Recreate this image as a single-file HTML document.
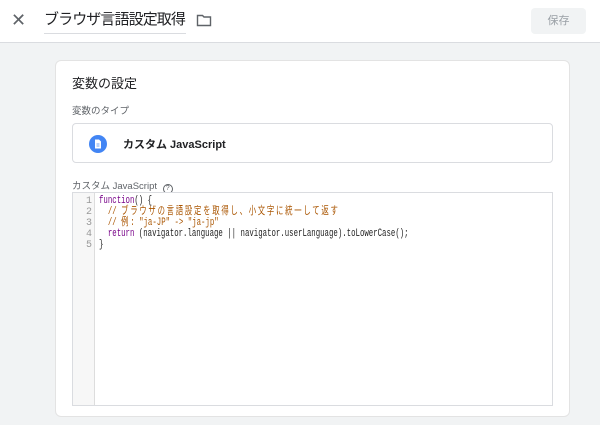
<!DOCTYPE html>
<html><head><meta charset="utf-8"><style>
*{margin:0;padding:0;box-sizing:border-box}
body{width:600px;height:425px;overflow:hidden;background:#f1f3f4;font-family:"Liberation Sans","Noto Sans CJK JP",sans-serif;color:#202124;position:relative}
.hdr{position:absolute;left:0;top:0;width:600px;height:43px;background:#fff;border-bottom:1px solid #dadce0}
.x{position:absolute;left:11px;top:10px;font-size:18px;color:#5f6368}
.title{position:absolute;left:44px;top:9px;width:142px;font-size:15px;letter-spacing:-0.9px;color:#202124;border-bottom:1px solid #dadce0;padding-bottom:2px;line-height:22px;white-space:nowrap}
.save{position:absolute;left:531px;top:8px;width:55px;height:26px;background:#f1f3f4;border-radius:4px;font-size:11px;color:#9aa0a6;text-align:center;line-height:26px}
.card{position:absolute;left:55px;top:60px;width:515px;height:357px;background:#fff;border:1px solid #e3e3e3;border-radius:6px}
.h{position:absolute;left:16px;top:12px;font-size:13px}
.lbl{position:absolute;font-size:9.5px;color:#5f6368}
.type{position:absolute;left:16px;top:62px;width:481px;height:40px;border:1px solid #dadce0;border-radius:4px}
.ic{position:absolute;left:16px;top:11px;width:18px;height:18px;border-radius:50%;background:#4285f4}
.tt{position:absolute;left:50px;top:12px;font-size:11px;font-weight:bold}
.code{position:absolute;left:16px;top:131px;width:481px;height:214px;border:1px solid #dadce0;background:#fff;overflow:hidden}
.gut{position:absolute;left:0;top:0;width:22px;height:100%;background:#f7f7f7;border-right:1px solid #ddd}
pre{font-family:"Liberation Mono","Noto Sans CJK JP",monospace;font-size:11px;line-height:11px}
.ln{position:absolute;left:0;top:3px;width:19px;text-align:right;color:#999;font-size:10px}
.src{position:absolute;left:26px;top:3px;color:#222;transform:scaleX(.67);transform-origin:0 0}
.k{color:#708}.c{color:#a50}.j{letter-spacing:2.6px}
</style></head><body>
<div class="hdr"><div class="x">✕</div><div class="title">ブラウザ言語設定取得</div>
<svg style="position:absolute;left:196px;top:14px" width="16" height="13" viewBox="0 0 16 13"><path d="M1.5 1.5h5l1.5 1.5h6.5v8.5h-13z" fill="none" stroke="#5f6368" stroke-width="1.4"/></svg>
<div class="save">保存</div></div>
<div class="card">
<div class="h">変数の設定</div>
<div class="lbl" style="left:16px;top:42px">変数のタイプ</div>
<div class="type"><div class="ic"><svg width="18" height="18" viewBox="0 0 18 18"><path d="M6 4.5h4l2 2v7H6z" fill="#fff"/><path d="M7.5 9h3M7.5 11h3" stroke="#4285f4" stroke-width=".8"/></svg></div><div class="tt">カスタム JavaScript</div></div>
<div class="lbl" style="left:16px;top:117px">カスタム JavaScript <span style="display:inline-block;width:10px;height:10px;border:1px solid #5f6368;border-radius:50%;font-size:7px;text-align:center;line-height:8px;margin-left:3px;vertical-align:-1px">?</span></div>
<div class="code"><div class="gut"></div>
<pre class="ln">1
2
3
4
5</pre>
<pre class="src"><span class="k">function</span>() {
  <span class="c">// <span class="j">ブラウザの言語設定を取得し、小文字に統一して返す</span></span>
  <span class="c">// <span class="j">例</span>: "ja-JP" -&gt; "ja-jp"</span>
  <span class="k">return</span> (navigator.language || navigator.userLanguage).toLowerCase();
}</pre></div>
</div>
</body></html>
